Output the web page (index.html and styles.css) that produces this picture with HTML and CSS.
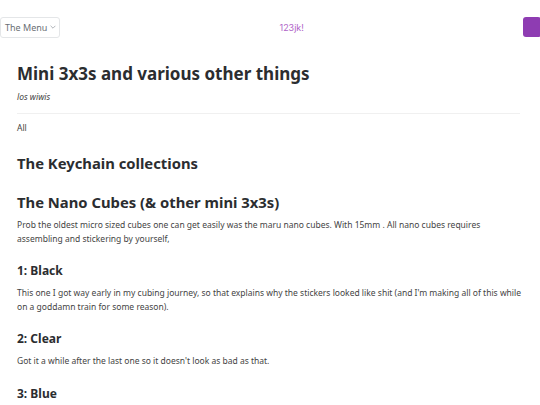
FILE: index.html
```html
<!DOCTYPE html>
<html lang="en">

<head>
  <meta charset="UTF-8">
  <title>Mini 3x3s and various other things</title>
  <link rel="stylesheet" href="styles.css">
</head>

<body>
  <!-- top bar -->
  <header class="top_bar">
    <button class="menu_btn">The Menu
      <svg class="chevron" viewBox="0 0 10 6" width="6" height="4">
        <path d="M1 1 L5 5 L9 1" fill="none" stroke="#9aa0a6" stroke-width="1.3" />
      </svg>
    </button>
    <a class="brand" href="#">123jk!</a>
    <span class="user_box"></span>
  </header>

  <main class="page">
    <h1 class="page_title">Mini 3x3s and various other things</h1>
    <p class="author">los wiwis</p>
    <hr class="divider">
    <p class="tags">All</p>

    <h2 class="section_title">The Keychain collections</h2>

    <h2 class="section_title">The Nano Cubes (&amp; other mini 3x3s)</h2>
    <p>Prob the oldest micro sized cubes one can get easily was the maru nano cubes. With 15mm . All nano cubes requires assembling and stickering by yourself,</p>

    <h3>1: Black</h3>
    <p>This one I got way early in my cubing journey, so that explains why the stickers looked like shit (and I'm making all of this while on a goddamn train for some reason).</p>

    <h3>2: Clear</h3>
    <p>Got it a while after the last one so it doesn't look as bad as that.</p>

    <h3>3: Blue</h3>
  </main>
</body>

</html>
```

FILE: styles.css
```css
* {
  box-sizing: border-box;
  margin: 0;
  padding: 0;
}

body {
  font-family: "Noto Sans", "Open Sans", sans-serif;
  color: #333;
  background: #fff;
}

.top_bar {
  display: flex;
  justify-content: space-between;
  align-items: center;
  padding-top: 17px;
  height: 37px;
}

.menu_btn {
  display: flex;
  align-items: center;
  gap: 3px;
  height: 21px;
  padding: 0 3px 0 4px;
  white-space: nowrap;
  font-family: "Noto Sans", "Liberation Sans", sans-serif;
  font-size: 9px;
  color: #6b7075;
  background: #fff;
  border: 1px solid #e4e6e8;
  border-radius: 3px;
}

.brand {
  font-family: "Inter", "Liberation Sans", sans-serif;
  font-size: 9px;
  color: #b064c8;
  text-decoration: none;
}

.user_box {
  width: 18px;
  height: 20px;
  margin-right: -1px;
  background: #8e3cb2;
  border-radius: 3px;
}

.page {
  padding: 0 17px;
}

.page_title {
  margin-top: 25px;
  font-size: 17px;
  font-weight: 700;
  line-height: 24px;
  color: #2b2d30;
}

.author {
  margin-top: 4px;
  font-size: 6.5px;
  font-style: italic;
  color: #555;
}

.divider {
  margin-top: 9px;
  margin-right: 3px;
  border: 0;
  border-top: 1px solid #f0f0f0;
}

.tags {
  margin-top: 7px;
  font-size: 8px;
  line-height: 12px;
}

.section_title {
  margin-top: 19px;
  font-size: 14.8px;
  font-weight: 700;
  line-height: 20px;
  color: #2b2d30;
}

.page p {
  font-size: 8.5px;
  line-height: 13.5px;
  color: #444;
}

.section_title + p {
  margin-top: 6px;
  margin-bottom: 2px;
}

.page h3 {
  margin-top: 18px;
  font-size: 12px;
  font-weight: 700;
  line-height: 16px;
  color: #2b2d30;
}

.page h3 + p {
  margin-top: 7px;
}
```
